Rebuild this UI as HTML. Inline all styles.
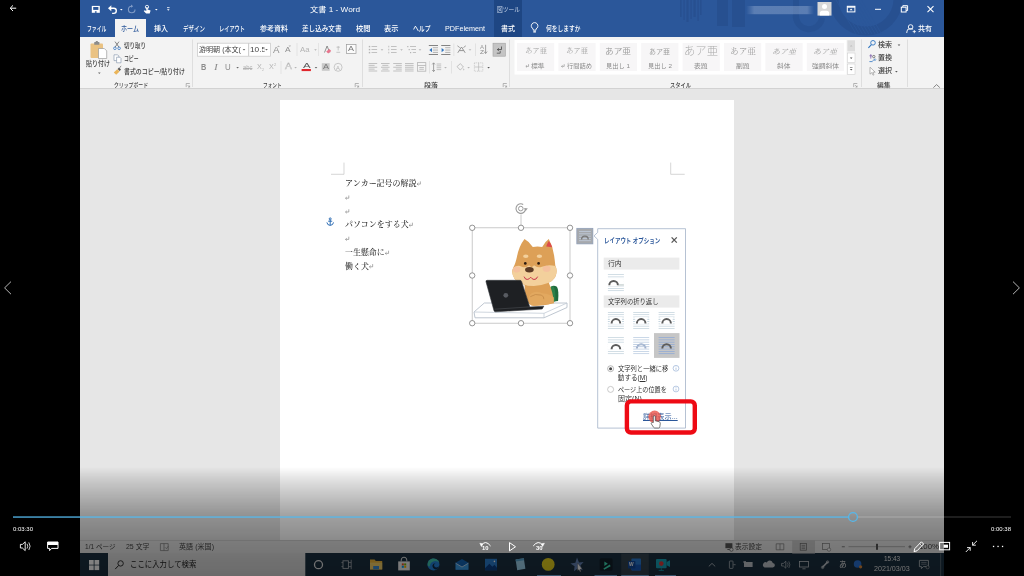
<!DOCTYPE html>
<html lang="ja"><head><meta charset="utf-8"><title>Word</title>
<style>
html,body{margin:0;padding:0;background:#000;}
body{width:1024px;height:576px;position:relative;overflow:hidden;}
.vid{position:absolute;left:0;top:0;width:1024px;height:576px;filter:blur(.45px);}
.ctl{position:absolute;left:0;top:0;width:1024px;height:576px;will-change:transform;}
.t{position:absolute;white-space:nowrap;display:inline-block;transform-origin:0 50%;}
</style></head>
<body>
<div class="vid">
<div style="position:absolute;left:80px;top:0px;width:864px;height:576px;background:#e6e6e6;"></div>
<div style="position:absolute;left:80px;top:0px;width:864px;height:36.5px;background:#2b579a;"></div>
<div style="position:absolute;left:80px;top:36.5px;width:864px;height:51.5px;background:#f3f3f3;"></div>
<div style="position:absolute;left:80px;top:88px;width:864px;height:0.8px;background:#d2d2d2;"></div>
<div style="position:absolute;left:279.5px;top:99.5px;width:454.5px;height:441px;background:#fff;"></div>
<div style="position:absolute;left:80px;top:540px;width:864px;height:13.5px;background:#e3e3e3;"></div>
<div style="position:absolute;left:80px;top:540px;width:864px;height:0.8px;background:#d0d0d0;"></div>
<div style="position:absolute;left:80px;top:553px;width:864px;height:23px;background:#1b3040;"></div>
<svg style="position:absolute;left:0px;top:0px;overflow:visible;clip-path:inset(0 80px 0 80px);" width="1024" height="37" viewBox="0 0 1024 37"><rect x="680" y="0" width="1.6" height="17" fill="#244b8a" opacity=".6"/><rect x="683.5" y="0" width="1.2" height="20" fill="#244b8a" opacity=".6"/><rect x="686.5" y="0" width="2" height="22" fill="#244b8a" opacity=".6"/><rect x="690.5" y="0" width="1.2" height="19" fill="#244b8a" opacity=".6"/><rect x="693.5" y="0" width="2.2" height="17" fill="#244b8a" opacity=".6"/><rect x="697.5" y="0" width="1.2" height="21" fill="#244b8a" opacity=".6"/><rect x="700" y="0" width="1.5" height="15" fill="#244b8a" opacity=".6"/><rect x="717" y="0" width="11" height="26" fill="#244b8a" opacity=".6"/><rect x="732" y="0" width="13" height="27" fill="#244b8a" opacity=".6"/><path d="M796 0v14a13 13 0 0 0 26 4" fill="none" stroke="#244b8a" stroke-width="6" opacity=".5"/><circle cx="866" cy="-1" r="32" fill="none" stroke="#244b8a" stroke-width="9" opacity=".6"/><g stroke="#2b579a" stroke-width="1" opacity=".8"><line x1="836.0" y1="0" x2="856.0" y2="34"/><line x1="839.2" y1="0" x2="859.2" y2="34"/><line x1="842.4" y1="0" x2="862.4" y2="34"/><line x1="845.6" y1="0" x2="865.6" y2="34"/><line x1="848.8" y1="0" x2="868.8" y2="34"/><line x1="852.0" y1="0" x2="872.0" y2="34"/><line x1="855.2" y1="0" x2="875.2" y2="34"/><line x1="858.4" y1="0" x2="878.4" y2="34"/><line x1="861.6" y1="0" x2="881.6" y2="34"/></g></svg>
<div style="position:absolute;left:494px;top:0px;width:28px;height:36.5px;background:#1e4683;"></div>
<span id="t0" class="t" style="left:497px;top:4.8px;font-size:6.5px;line-height:10.4px;color:#c9d6ea;font-family:'Liberation Sans','Noto Sans CJK JP',sans-serif;font-weight:400;transform:scaleX(0.885);">図ツール</span>
<svg style="position:absolute;left:0px;top:0px;overflow:visible;" width="1024" height="37" viewBox="0 0 1024 37"><rect x="91.800" y="5.900" width="8" height="6.900" fill="#fff"/><rect x="93.200" y="7" width="5.200" height="2.900" fill="#2b579a"/><rect x="94.900" y="11.300" width="1.700" height="1.500" fill="#2b579a"/><path d="M109.5 8.2h4.2a2.6 2.6 0 0 1 0 5.2h-1.6" fill="none" stroke="#fff" stroke-width="1.4"/><path d="M108 8.2l3.3-3v6z" fill="#fff"/><path d="M120 9h2.6l-1.3 1.5z" fill="#fff"/><path d="M135 9.5a3.3 3.3 0 1 1-3.3-3.3" fill="none" stroke="#7f9ac6" stroke-width="1.1"/><path d="M131 4.6l2.2 1.7-2.2 1.5z" fill="#7f9ac6"/><circle cx="147" cy="7" r="1.700" fill="none" stroke="#fff" stroke-width=".8"/><path d="M146.300 7v4l-1.600-.8-1 .9 2.400 2.500h3.600l.9-3.200-3-.9v-2.500z" fill="#fff"/><path d="M155 9h2.6l-1.3 1.5z" fill="#fff"/><rect x="167" y="7.3" width="2.6" height=".8" fill="#fff"/><path d="M167 9.2h2.6l-1.3 1.5z" fill="#fff"/><defs><linearGradient id="ub" x1="0" x2="1"><stop offset="0" stop-color="#8ea7cf" stop-opacity=".0"/><stop offset=".12" stop-color="#9db3d6" stop-opacity=".42"/><stop offset=".9" stop-color="#9db3d6" stop-opacity=".42"/><stop offset="1" stop-color="#8ea7cf" stop-opacity="0"/></linearGradient></defs><rect x="746" y="6" width="68" height="8.2" fill="url(#ub)"/><rect x="817.5" y="2" width="14" height="13.6" fill="#d8d8d8"/><circle cx="824.5" cy="6.6" r="2.5" fill="#fff"/><path d="M819.8 15.6v-2.2a2.6 2.6 0 0 1 2.6-2.6h4.2a2.6 2.6 0 0 1 2.6 2.6v2.2z" fill="#fff"/><rect x="847.3" y="6.3" width="7.6" height="5.6" fill="none" stroke="#fff" stroke-width="1"/><path d="M849.6 10.3l1.5-1.8 1.5 1.8z" fill="#fff"/><rect x="847.3" y="6.3" width="7.6" height="1.4" fill="#fff"/><rect x="875" y="8.8" width="6" height="1" fill="#fff"/><rect x="901.3" y="7.2" width="4.8" height="4.8" fill="none" stroke="#fff" stroke-width="1"/><path d="M902.8 7.2v-1.5h4.8v4.8h-1.5" fill="none" stroke="#fff" stroke-width="1"/><path d="M927.5 6.2l6 6m0-6l-6 6" stroke="#fff" stroke-width="1.1"/><path d="M533.2 30.2v-1.3a3.3 3.3 0 1 1 2.8 0v1.3z" fill="none" stroke="#fff" stroke-width=".9"/><rect x="533.3" y="31.2" width="2.6" height="1.3" fill="#fff"/><circle cx="910.6" cy="27" r="2.3" fill="none" stroke="#fff" stroke-width=".9"/><path d="M906.8 33v-1a3.3 3.3 0 0 1 3.3-3.3h1a3.3 3.3 0 0 1 2 .7" fill="none" stroke="#fff" stroke-width=".9"/><path d="M912.7 31.6h3.2m-1.6-1.6v3.2" stroke="#fff" stroke-width=".8"/></svg>
<span id="t1" class="t" style="left:310px;top:4.08px;font-size:7.4px;line-height:11.84px;color:#fff;font-family:'Liberation Sans','Noto Sans CJK JP',sans-serif;font-weight:400;transform:scaleX(1.110);">文書 1  -  Word</span>
<div style="position:absolute;left:115.2px;top:19.2px;width:30.8px;height:17.8px;background:#f3f3f3;"></div>
<span id="t2" class="t" style="left:87px;top:22.58px;font-size:7.4px;line-height:11.84px;color:#fff;font-family:'Liberation Sans','Noto Sans CJK JP',sans-serif;font-weight:500;transform:scaleX(0.659);">ファイル</span>
<span id="t3" class="t" style="left:121px;top:22.58px;font-size:7.4px;line-height:11.84px;color:#2b579a;font-family:'Liberation Sans','Noto Sans CJK JP',sans-serif;font-weight:500;transform:scaleX(0.820);">ホーム</span>
<span id="t4" class="t" style="left:153.5px;top:22.58px;font-size:7.4px;line-height:11.84px;color:#fff;font-family:'Liberation Sans','Noto Sans CJK JP',sans-serif;font-weight:500;transform:scaleX(0.946);">挿入</span>
<span id="t5" class="t" style="left:182.5px;top:22.58px;font-size:7.4px;line-height:11.84px;color:#fff;font-family:'Liberation Sans','Noto Sans CJK JP',sans-serif;font-weight:500;transform:scaleX(0.744);">デザイン</span>
<span id="t6" class="t" style="left:219px;top:22.58px;font-size:7.4px;line-height:11.84px;color:#fff;font-family:'Liberation Sans','Noto Sans CJK JP',sans-serif;font-weight:500;transform:scaleX(0.703);">レイアウト</span>
<span id="t7" class="t" style="left:259.5px;top:22.58px;font-size:7.4px;line-height:11.84px;color:#fff;font-family:'Liberation Sans','Noto Sans CJK JP',sans-serif;font-weight:500;transform:scaleX(0.947);">参考資料</span>
<span id="t8" class="t" style="left:302px;top:22.58px;font-size:7.4px;line-height:11.84px;color:#fff;font-family:'Liberation Sans','Noto Sans CJK JP',sans-serif;font-weight:500;transform:scaleX(0.890);">差し込み文書</span>
<span id="t9" class="t" style="left:355.5px;top:22.58px;font-size:7.4px;line-height:11.84px;color:#fff;font-family:'Liberation Sans','Noto Sans CJK JP',sans-serif;font-weight:500;transform:scaleX(0.980);">校閲</span>
<span id="t10" class="t" style="left:384px;top:22.58px;font-size:7.4px;line-height:11.84px;color:#fff;font-family:'Liberation Sans','Noto Sans CJK JP',sans-serif;font-weight:500;transform:scaleX(0.980);">表示</span>
<span id="t11" class="t" style="left:413px;top:22.58px;font-size:7.4px;line-height:11.84px;color:#fff;font-family:'Liberation Sans','Noto Sans CJK JP',sans-serif;font-weight:500;transform:scaleX(0.789);">ヘルプ</span>
<span id="t12" class="t" style="left:445px;top:22.58px;font-size:7.4px;line-height:11.84px;color:#fff;font-family:'Liberation Sans','Noto Sans CJK JP',sans-serif;font-weight:500;transform:scaleX(0.974);">PDFelement</span>
<span id="t13" class="t" style="left:501px;top:22.58px;font-size:7.4px;line-height:11.84px;color:#fff;font-family:'Liberation Sans','Noto Sans CJK JP',sans-serif;font-weight:500;transform:scaleX(0.946);">書式</span>
<span id="t14" class="t" style="left:545.5px;top:22.58px;font-size:7.4px;line-height:11.84px;color:#fff;font-family:'Liberation Sans','Noto Sans CJK JP',sans-serif;font-weight:500;transform:scaleX(0.778);">何をしますか</span>
<span id="t15" class="t" style="left:918px;top:22.58px;font-size:7.4px;line-height:11.84px;color:#fff;font-family:'Liberation Sans','Noto Sans CJK JP',sans-serif;font-weight:500;transform:scaleX(0.946);">共有</span>
<svg style="position:absolute;left:0px;top:0px;overflow:visible;" width="1024" height="90" viewBox="0 0 1024 90"><rect x="192" y="39.5" width=".7" height="47.5" fill="#d4d4d4"/><rect x="362" y="39.5" width=".7" height="47.5" fill="#d4d4d4"/><rect x="509" y="39.5" width=".7" height="47.5" fill="#d4d4d4"/><rect x="861" y="39.5" width=".7" height="47.5" fill="#d4d4d4"/><rect x="907" y="39.5" width=".7" height="47.5" fill="#d4d4d4"/><rect x="90.5" y="43.5" width="12.5" height="14.5" rx="1" fill="#eac282"/><rect x="94.200" y="42" width="5.200" height="2.800" rx=".6" fill="#8c8c8c"/><rect x="95.800" y="41" width="2" height="1.600" fill="#8c8c8c"/><path d="M98.5 48.5h5.8l2.4 2.4v7.6h-8.2z" fill="#fff" stroke="#8c8c8c" stroke-width=".6"/><path d="M98.0 72.6h2.6l-1.3 1.5z" fill="#666"/><path d="M115 41.6l4 5.6m0-5.6l-4 5.6" stroke="#666" stroke-width=".8"/><circle cx="114.9" cy="48.3" r="1.3" fill="none" stroke="#3a78c4" stroke-width=".8"/><circle cx="119.1" cy="48.3" r="1.3" fill="none" stroke="#3a78c4" stroke-width=".8"/><path d="M114 54.8h3.6l1.2 1.2v4.6h-4.8z" fill="#fff" stroke="#7c8ea6" stroke-width=".6"/><path d="M116.6 57.2h3.2l1.2 1.2v4.4h-4.4z" fill="#fff" stroke="#7c8ea6" stroke-width=".6"/><path d="M113.8 72.4l3.4-3.2 2.4 2.4-3.4 3.2z" fill="#eab55a"/><path d="M117.6 69l1.4-1.4 2 2-1.4 1.4z" fill="#555"/><path d="M119.6 67.6l1.6-1.4" stroke="#555" stroke-width=".8"/><path d="M186.2 87.1v-3.6h3.6" fill="none" stroke="#8a8a8a" stroke-width=".6"/><path d="M187.6 85.1l2 2m0-1.6v1.6h-1.6" fill="none" stroke="#8a8a8a" stroke-width=".6"/><rect x="197.5" y="43.2" width="51" height="13" fill="#fff" stroke="#c6c6c6" stroke-width=".7"/><rect x="248.8" y="43.2" width="21.7" height="13" fill="#fff" stroke="#c6c6c6" stroke-width=".7"/><path d="M242.7 49.099999999999994h2.6l-1.3 1.5z" fill="#666"/><path d="M265.2 49.099999999999994h2.6l-1.3 1.5z" fill="#666"/><path d="M278.5 45.4l1.5 1.6h-3z" fill="#b4b4b4"/><path d="M289.8 47l1.3-1.4h-2.6z" fill="#b4b4b4"/><path d="M314.2 49.3h2.6l-1.3 1.5z" fill="#b4b4b4"/><path d="M324.5 52.5l2.6-6.5 2.6 6.5" fill="none" stroke="#777" stroke-width=".8"/><path d="M326.2 51.6l3.2-2.6 1.8 2-3 2.6z" fill="#e8748c"/><path d="M336.5 47.2h3.4M338.2 46v4.5M336.4 52.3h3.8" stroke="#b4b4b4" stroke-width=".7"/><rect x="346.400" y="44.400" width="9.600" height="9.200" fill="#fbfbfb" stroke="#9a9a9a" stroke-width=".7"/><path d="M236.29999999999998 66.89999999999999h2.6l-1.3 1.5z" fill="#666"/><path d="M294.3 66.89999999999999h2.6l-1.3 1.5z" fill="#b4b4b4"/><path d="M314.7 66.89999999999999h2.6l-1.3 1.5z" fill="#666"/><rect x="301.6" y="69" width="9.300" height="2.100" fill="#e0262c"/><rect x="321.800" y="63.200" width="7.900" height="7.600" fill="#c9c9c9"/><circle cx="338.100" cy="67.300" r="4" fill="none" stroke="#b4b4b4" stroke-width=".7"/><rect x="296.700" y="43" width=".6" height="13" fill="#dadada"/><rect x="318.200" y="43" width=".6" height="13" fill="#dadada"/><rect x="280.700" y="61" width=".6" height="13" fill="#dadada"/><path d="M355.2 87.1v-3.6h3.6" fill="none" stroke="#8a8a8a" stroke-width=".6"/><path d="M356.6 85.1l2 2m0-1.6v1.6h-1.6" fill="none" stroke="#8a8a8a" stroke-width=".6"/></svg>
<span id="t16" class="t" style="left:85.5px;top:59.06px;font-size:6.8px;line-height:10.88px;color:#3c3c3c;font-family:'Liberation Sans','Noto Sans CJK JP',sans-serif;font-weight:500;transform:scaleX(0.883);">貼り付け</span>
<span id="t17" class="t" style="left:124px;top:40.56px;font-size:6.8px;line-height:10.88px;color:#3c3c3c;font-family:'Liberation Sans','Noto Sans CJK JP',sans-serif;font-weight:500;transform:scaleX(0.809);">切り取り</span>
<span id="t18" class="t" style="left:124px;top:54.06px;font-size:6.8px;line-height:10.88px;color:#3c3c3c;font-family:'Liberation Sans','Noto Sans CJK JP',sans-serif;font-weight:500;transform:scaleX(0.711);">コピー</span>
<span id="t19" class="t" style="left:124px;top:67.36px;font-size:6.8px;line-height:10.88px;color:#3c3c3c;font-family:'Liberation Sans','Noto Sans CJK JP',sans-serif;font-weight:500;transform:scaleX(0.873);">書式のコピー/貼り付け</span>
<span id="t20" class="t" style="left:114px;top:80.14px;font-size:6.2px;line-height:9.92px;color:#3c3c3c;font-family:'Liberation Sans','Noto Sans CJK JP',sans-serif;font-weight:500;transform:scaleX(0.785);">クリップボード</span>
<span id="t21" class="t" style="left:199px;top:44.66px;font-size:6.8px;line-height:10.88px;color:#444;font-family:'Liberation Sans','Noto Sans CJK JP',sans-serif;font-weight:400;transform:scaleX(1.039);">游明朝 (本文(</span>
<span id="t22" class="t" style="left:250px;top:44.18px;font-size:7.4px;line-height:11.84px;color:#444;font-family:'Liberation Sans','Noto Sans CJK JP',sans-serif;font-weight:400;transform:scaleX(1.115);overflow:hidden;width:13px;">10.5</span>
<span id="t23" class="t" style="left:273px;top:42.42px;font-size:9.6px;line-height:15.36px;color:#8f8f8f;font-family:'Liberation Sans','Noto Sans CJK JP',sans-serif;font-weight:400;transform:scaleX(1.015);">A</span>
<span id="t24" class="t" style="left:285.4px;top:44.3px;font-size:8px;line-height:12.8px;color:#8f8f8f;font-family:'Liberation Sans','Noto Sans CJK JP',sans-serif;font-weight:400;transform:scaleX(1.048);">A</span>
<span id="t25" class="t" style="left:300.4px;top:44.02px;font-size:7.6px;line-height:12.16px;color:#b4b4b4;font-family:'Liberation Sans','Noto Sans CJK JP',sans-serif;font-weight:400;transform:scaleX(1.033);">Aa</span>
<span id="t26" class="t" style="left:200.9px;top:60.58px;font-size:8.4px;line-height:13.44px;color:#8c8c8c;font-family:'Liberation Sans','Noto Sans CJK JP',sans-serif;font-weight:700;transform:scaleX(0.874);">B</span>
<span id="t27" class="t" style="left:214px;top:59.76px;font-size:8.8px;line-height:14.08px;color:#8c8c8c;font-family:'Liberation Serif',serif;font-weight:400;transform:scaleX(1.294);font-style:italic;">I</span>
<span id="t28" class="t" style="left:225.1px;top:60.58px;font-size:8.4px;line-height:13.44px;color:#8c8c8c;font-family:'Liberation Sans','Noto Sans CJK JP',sans-serif;font-weight:400;transform:scaleX(0.940);">U</span>
<span id="t29" class="t" style="left:243px;top:62.62px;font-size:6.6px;line-height:10.56px;color:#b4b4b4;font-family:'Liberation Sans','Noto Sans CJK JP',sans-serif;font-weight:400;transform:scaleX(0.883);text-decoration:line-through;">abc</span>
<span id="t30" class="t" style="left:256.8px;top:61.42px;font-size:7.6px;line-height:12.16px;color:#b4b4b4;font-family:'Liberation Sans','Noto Sans CJK JP',sans-serif;font-weight:400;transform:scaleX(0.945);">X</span>
<span id="t31" class="t" style="left:262px;top:67.06px;font-size:3.8px;line-height:6.08px;color:#b4b4b4;font-family:'Liberation Sans','Noto Sans CJK JP',sans-serif;font-weight:400;transform:scaleX(0.941);">2</span>
<span id="t32" class="t" style="left:269px;top:61.42px;font-size:7.6px;line-height:12.16px;color:#b4b4b4;font-family:'Liberation Sans','Noto Sans CJK JP',sans-serif;font-weight:400;transform:scaleX(0.945);">X</span>
<span id="t33" class="t" style="left:274.2px;top:62.06px;font-size:3.8px;line-height:6.08px;color:#b4b4b4;font-family:'Liberation Sans','Noto Sans CJK JP',sans-serif;font-weight:400;transform:scaleX(1.082);">2</span>
<span id="t34" class="t" style="left:284.6px;top:60.42px;font-size:8.6px;line-height:13.76px;color:#c4c4c4;font-family:'Liberation Sans','Noto Sans CJK JP',sans-serif;font-weight:400;transform:scaleX(1.186);-webkit-text-stroke:.4px #b4b4b4;color:#f3f3f3;">A</span>
<span id="t35" class="t" style="left:302.6px;top:59.7px;font-size:8px;line-height:12.8px;color:#555;font-family:'Liberation Sans','Noto Sans CJK JP',sans-serif;font-weight:400;transform:scaleX(1.422);">A</span>
<span id="t36" class="t" style="left:322.8px;top:61.42px;font-size:7.6px;line-height:12.16px;color:#777;font-family:'Liberation Sans','Noto Sans CJK JP',sans-serif;font-weight:400;transform:scaleX(1.182);">A</span>
<span id="t37" class="t" style="left:336.2px;top:63.8px;font-size:5px;line-height:8px;color:#b4b4b4;font-family:'Liberation Sans','Noto Sans CJK JP',sans-serif;font-weight:400;transform:scaleX(1.136);">A</span>
<span id="t38" class="t" style="left:348.2px;top:42.9px;font-size:8px;line-height:12.8px;color:#777;font-family:'Liberation Sans','Noto Sans CJK JP',sans-serif;font-weight:400;transform:scaleX(1.123);">A</span>
<span id="t39" class="t" style="left:263px;top:80.14px;font-size:6.2px;line-height:9.92px;color:#3c3c3c;font-family:'Liberation Sans','Noto Sans CJK JP',sans-serif;font-weight:500;transform:scaleX(0.756);">フォント</span>
<svg style="position:absolute;left:0px;top:0px;overflow:visible;" width="1024" height="90" viewBox="0 0 1024 90"><rect x="368.8" y="45.900000000000006" width="1.4" height="1.4" fill="#b4b4b4"/><rect x="371.5" y="46.2" width="5.6" height=".8" fill="#b4b4b4"/><rect x="368.8" y="48.900000000000006" width="1.4" height="1.4" fill="#b4b4b4"/><rect x="371.5" y="49.2" width="5.6" height=".8" fill="#b4b4b4"/><rect x="368.8" y="51.900000000000006" width="1.4" height="1.4" fill="#b4b4b4"/><rect x="371.5" y="52.2" width="5.6" height=".8" fill="#b4b4b4"/><path d="M380.7 49.3h2.6l-1.3 1.5z" fill="#b4b4b4"/><rect x="388.4" y="45.800000000000004" width=".8" height="1.6" fill="#b4b4b4"/><rect x="391" y="46.2" width="5.6" height=".8" fill="#b4b4b4"/><rect x="388.4" y="48.800000000000004" width=".8" height="1.6" fill="#b4b4b4"/><rect x="391" y="49.2" width="5.6" height=".8" fill="#b4b4b4"/><rect x="388.4" y="51.800000000000004" width=".8" height="1.6" fill="#b4b4b4"/><rect x="391" y="52.2" width="5.6" height=".8" fill="#b4b4b4"/><path d="M400.2 49.3h2.6l-1.3 1.5z" fill="#b4b4b4"/><rect x="407.2" y="46.0" width="1.2" height="1.2" fill="#b4b4b4"/><rect x="410.0" y="46.2" width="6.0" height=".8" fill="#b4b4b4"/><rect x="408.59999999999997" y="49.0" width="1.2" height="1.2" fill="#b4b4b4"/><rect x="411.4" y="49.2" width="4.6" height=".8" fill="#b4b4b4"/><rect x="410.0" y="52.0" width="1.2" height="1.2" fill="#b4b4b4"/><rect x="412.8" y="52.2" width="3.2" height=".8" fill="#b4b4b4"/><path d="M418.7 49.3h2.6l-1.3 1.5z" fill="#b4b4b4"/><rect x="428.8" y="45" width="9.2" height=".9" fill="#777"/><rect x="432.8" y="47.3" width="5.2" height=".9" fill="#aaa"/><rect x="432.8" y="49.6" width="5.2" height=".9" fill="#aaa"/><rect x="432.8" y="51.9" width="5.2" height=".9" fill="#aaa"/><rect x="428.8" y="54.1" width="9.2" height=".9" fill="#777"/><rect x="441.2" y="45" width="9.2" height=".9" fill="#777"/><rect x="445.2" y="47.3" width="5.2" height=".9" fill="#aaa"/><rect x="445.2" y="49.6" width="5.2" height=".9" fill="#aaa"/><rect x="445.2" y="51.9" width="5.2" height=".9" fill="#aaa"/><rect x="441.2" y="54.1" width="9.2" height=".9" fill="#777"/><path d="M432 48v4.2l-2.6-2.1z" fill="#2e74c0"/><path d="M441.6 48v4.2l2.6-2.1z" fill="#2e74c0"/><rect x="453.6" y="43.5" width=".6" height="12.5" fill="#d8d8d8"/><rect x="475" y="43.5" width=".6" height="12.5" fill="#d8d8d8"/><path d="M457.800 52.800l3.700-5.800 3.700 5.800M459.300 50.600h4.400" fill="none" stroke="#8a8a8a" stroke-width=".9"/><path d="M457.400 45.800l2.400 1.800m6-1.800l-2.400 1.800" stroke="#8a8a8a" stroke-width=".8"/><path d="M468.7 49.3h2.6l-1.3 1.5z" fill="#b4b4b4"/><path d="M485.6 44.8v8.6m-1.5-1.8l1.5 1.9 1.5-1.9" fill="none" stroke="#8a8a8a" stroke-width=".8"/><rect x="493" y="43.2" width="12.4" height="13" fill="#c4c4c4" stroke="#a2a2a2" stroke-width=".6"/><path d="M501.5 46.5v3h-4m1.4-1.2l-1.6 1.3 1.6 1.3" fill="none" stroke="#444" stroke-width=".8"/><path d="M500.2 50.8v2.4h-3.4" fill="none" stroke="#444" stroke-width=".7"/><rect x="368.6" y="63" width="8.6" height=".8" fill="#b4b4b4"/><rect x="368.6" y="64.9" width="6" height=".8" fill="#b4b4b4"/><rect x="368.6" y="66.8" width="8.6" height=".8" fill="#b4b4b4"/><rect x="368.6" y="68.7" width="6" height=".8" fill="#b4b4b4"/><rect x="368.6" y="70.6" width="8.6" height=".8" fill="#b4b4b4"/><rect x="381" y="63" width="8.6" height=".8" fill="#b4b4b4"/><rect x="382.3" y="64.9" width="6" height=".8" fill="#b4b4b4"/><rect x="381" y="66.8" width="8.6" height=".8" fill="#b4b4b4"/><rect x="382.3" y="68.7" width="6" height=".8" fill="#b4b4b4"/><rect x="381" y="70.6" width="8.6" height=".8" fill="#b4b4b4"/><rect x="393.2" y="63" width="8.6" height=".8" fill="#b4b4b4"/><rect x="395.8" y="64.9" width="6" height=".8" fill="#b4b4b4"/><rect x="393.2" y="66.8" width="8.6" height=".8" fill="#b4b4b4"/><rect x="395.8" y="68.7" width="6" height=".8" fill="#b4b4b4"/><rect x="393.2" y="70.6" width="8.6" height=".8" fill="#b4b4b4"/><rect x="405" y="63" width="8.6" height=".8" fill="#b4b4b4"/><rect x="405" y="64.9" width="8.6" height=".8" fill="#b4b4b4"/><rect x="405" y="66.8" width="8.6" height=".8" fill="#b4b4b4"/><rect x="405" y="68.7" width="8.6" height=".8" fill="#b4b4b4"/><rect x="405" y="70.6" width="8.6" height=".8" fill="#b4b4b4"/><rect x="417.4" y="62.6" width="8.4" height="8.6" fill="none" stroke="#b4b4b4" stroke-width=".8"/><rect x="417.4" y="65" width="8.4" height=".8" fill="#b4b4b4"/><rect x="419.3" y="67" width="4.6" height=".8" fill="#b4b4b4"/><rect x="419.3" y="68.8" width="4.6" height=".8" fill="#b4b4b4"/><rect x="429" y="61" width=".6" height="12.5" fill="#d8d8d8"/><rect x="451" y="61" width=".6" height="12.5" fill="#d8d8d8"/><path d="M433.6 63v8.4m-1.3-7l1.3-1.6 1.3 1.6m-2.6 5.6l1.3 1.6 1.3-1.6" fill="none" stroke="#8a8a8a" stroke-width=".8"/><rect x="436.6" y="63.6" width="4.6" height=".8" fill="#b4b4b4"/><rect x="436.6" y="65.5" width="4.6" height=".8" fill="#b4b4b4"/><rect x="436.6" y="67.4" width="4.6" height=".8" fill="#b4b4b4"/><rect x="436.6" y="69.3" width="4.6" height=".8" fill="#b4b4b4"/><path d="M444.2 66.89999999999999h2.6l-1.3 1.5z" fill="#b4b4b4"/><path d="M457 66.6l3.4-3 3 3.4-3.2 3z" fill="none" stroke="#b4b4b4" stroke-width=".8"/><path d="M463.8 68.2q1.2 1.8 0 2.4-1.2-.6 0-2.4z" fill="#b4b4b4"/><path d="M467.3 66.89999999999999h2.6l-1.3 1.5z" fill="#b4b4b4"/><rect x="474.4" y="62.8" width="8.4" height="8.4" fill="none" stroke="#b4b4b4" stroke-width=".6" stroke-dasharray="1 .8"/><path d="M474.4 67h8.4M478.6 62.8v8.4" stroke="#b4b4b4" stroke-width=".6"/><path d="M487.3 66.89999999999999h2.6l-1.3 1.5z" fill="#555"/><path d="M503.2 87.1v-3.6h3.6" fill="none" stroke="#8a8a8a" stroke-width=".6"/><path d="M504.6 85.1l2 2m0-1.6v1.6h-1.6" fill="none" stroke="#8a8a8a" stroke-width=".6"/></svg>
<span id="t40" class="t" style="left:480px;top:44.32px;font-size:4.6px;line-height:7.36px;color:#9a9a9a;font-family:'Liberation Sans','Noto Sans CJK JP',sans-serif;font-weight:400;transform:scaleX(1.299);">A</span>
<span id="t41" class="t" style="left:480px;top:49.42px;font-size:4.6px;line-height:7.36px;color:#8a8a8a;font-family:'Liberation Sans','Noto Sans CJK JP',sans-serif;font-weight:400;transform:scaleX(1.422);">Z</span>
<span id="t42" class="t" style="left:424px;top:80.14px;font-size:6.2px;line-height:9.92px;color:#3c3c3c;font-family:'Liberation Sans','Noto Sans CJK JP',sans-serif;font-weight:500;transform:scaleX(1.131);">段落</span>
<svg style="position:absolute;left:0px;top:0px;overflow:visible;" width="1024" height="90" viewBox="0 0 1024 90"><rect x="514.5" y="40" width="332" height="34.6" fill="#fff"/><rect x="517" y="43" width="37.2" height="28" fill="#f7f6f7"/><rect x="558.4" y="43" width="37.2" height="28" fill="#f7f6f7"/><rect x="599.8" y="43" width="37.2" height="28" fill="#f7f6f7"/><rect x="641.2" y="43" width="37.2" height="28" fill="#f7f6f7"/><rect x="682.6" y="43" width="37.2" height="28" fill="#f7f6f7"/><rect x="724" y="43" width="37.2" height="28" fill="#f7f6f7"/><rect x="765.4" y="43" width="37.2" height="28" fill="#f7f6f7"/><rect x="806.8" y="43" width="37.2" height="28" fill="#f7f6f7"/><rect x="847.4" y="40.3" width="7.6" height="11" fill="#dcdcdc"/><rect x="847.4" y="53" width="7.6" height="9.6" fill="#fff" stroke="#c8c8c8" stroke-width=".5"/><rect x="847.4" y="64" width="7.6" height="10.4" fill="#fff" stroke="#c8c8c8" stroke-width=".5"/><path d="M849.9 46.6h2.6l-1.3-1.5z" fill="#bdbdbd"/><path d="M849.9000000000001 57.5h2.6l-1.3 1.5z" fill="#555"/><path d="M849.9000000000001 69.1h2.6l-1.3 1.5z" fill="#555"/><rect x="849.9" y="67.2" width="2.6" height=".6" fill="#555"/><path d="M853.7 87.1v-3.6h3.6" fill="none" stroke="#8a8a8a" stroke-width=".6"/><path d="M855.1 85.1l2 2m0-1.6v1.6h-1.6" fill="none" stroke="#8a8a8a" stroke-width=".6"/></svg>
<span id="t43" class="t" style="left:524.6px;top:46px;font-size:7px;line-height:11.2px;color:#a2a2a2;font-family:'Liberation Serif','Noto Serif CJK SC',serif;font-weight:400;transform:scaleX(1.048);">あア亜</span>
<span id="t44" class="t" style="left:531.35px;top:60.94px;font-size:6.2px;line-height:9.92px;color:#8a8a8a;font-family:'Liberation Sans','Noto Sans CJK JP',sans-serif;font-weight:400;transform:scaleX(1.091);">標準</span>
<svg style="position:absolute;left:0;top:0;overflow:visible" width="1" height="1"><path d="M528.55 64.2v2.200h-2.600m1-1l-1.100 1 1.100 1" fill="none" stroke="#8a8a8a" stroke-width=".6"/></svg>
<span id="t45" class="t" style="left:566px;top:46px;font-size:7px;line-height:11.2px;color:#a2a2a2;font-family:'Liberation Serif','Noto Serif CJK SC',serif;font-weight:400;transform:scaleX(1.048);">あア亜</span>
<span id="t46" class="t" style="left:567px;top:60.94px;font-size:6.2px;line-height:9.92px;color:#8a8a8a;font-family:'Liberation Sans','Noto Sans CJK JP',sans-serif;font-weight:400;transform:scaleX(1.010);">行間詰め</span>
<svg style="position:absolute;left:0;top:0;overflow:visible" width="1" height="1"><path d="M564.2 64.2v2.200h-2.600m1-1l-1.100 1 1.100 1" fill="none" stroke="#8a8a8a" stroke-width=".6"/></svg>
<span id="t47" class="t" style="left:605.4px;top:45.7px;font-size:8px;line-height:12.8px;color:#a2a2a2;font-family:'Liberation Sans','Noto Sans CJK JP',sans-serif;font-weight:400;transform:scaleX(1.083);">あア亜</span>
<span id="t48" class="t" style="left:606.4px;top:60.94px;font-size:6.2px;line-height:9.92px;color:#8a8a8a;font-family:'Liberation Sans','Noto Sans CJK JP',sans-serif;font-weight:400;transform:scaleX(1.011);">見出し 1</span>
<span id="t49" class="t" style="left:649.3px;top:46.82px;font-size:6.6px;line-height:10.56px;color:#a2a2a2;font-family:'Liberation Sans','Noto Sans CJK JP',sans-serif;font-weight:400;transform:scaleX(1.062);">あア亜</span>
<span id="t50" class="t" style="left:647.8px;top:60.94px;font-size:6.2px;line-height:9.92px;color:#8a8a8a;font-family:'Liberation Sans','Noto Sans CJK JP',sans-serif;font-weight:400;transform:scaleX(1.011);">見出し 2</span>
<span id="t51" class="t" style="left:684.2px;top:43.14px;font-size:11.2px;line-height:17.92px;color:#ababab;font-family:'Liberation Sans','Noto Sans CJK JP',sans-serif;font-weight:300;transform:scaleX(1.013);">あア亜</span>
<span id="t52" class="t" style="left:694.45px;top:60.94px;font-size:6.2px;line-height:9.92px;color:#8a8a8a;font-family:'Liberation Sans','Noto Sans CJK JP',sans-serif;font-weight:400;transform:scaleX(1.091);">表題</span>
<span id="t53" class="t" style="left:729.6px;top:44.88px;font-size:8.4px;line-height:13.44px;color:#a2a2a2;font-family:'Liberation Serif','Noto Serif CJK SC',serif;font-weight:400;transform:scaleX(1.035);">あア亜</span>
<span id="t54" class="t" style="left:735.85px;top:60.94px;font-size:6.2px;line-height:9.92px;color:#8a8a8a;font-family:'Liberation Sans','Noto Sans CJK JP',sans-serif;font-weight:400;transform:scaleX(1.091);">副題</span>
<span id="t55" class="t" style="left:772px;top:45.68px;font-size:7.4px;line-height:11.84px;color:#a2a2a2;font-family:'Liberation Serif','Noto Serif CJK SC',serif;font-weight:400;transform:scaleX(1.082);font-style:italic;">あア亜</span>
<span id="t56" class="t" style="left:777.25px;top:60.94px;font-size:6.2px;line-height:9.92px;color:#8a8a8a;font-family:'Liberation Sans','Noto Sans CJK JP',sans-serif;font-weight:400;transform:scaleX(1.091);">斜体</span>
<span id="t57" class="t" style="left:813.4px;top:45.68px;font-size:7.4px;line-height:11.84px;color:#a2a2a2;font-family:'Liberation Serif','Noto Serif CJK SC',serif;font-weight:400;transform:scaleX(1.082);font-style:italic;">あア亜</span>
<span id="t58" class="t" style="left:811.9px;top:60.94px;font-size:6.2px;line-height:9.92px;color:#8a8a8a;font-family:'Liberation Sans','Noto Sans CJK JP',sans-serif;font-weight:400;transform:scaleX(1.091);">強調斜体</span>
<span id="t59" class="t" style="left:670px;top:80.14px;font-size:6.2px;line-height:9.92px;color:#3c3c3c;font-family:'Liberation Sans','Noto Sans CJK JP',sans-serif;font-weight:500;transform:scaleX(0.848);">スタイル</span>
<svg style="position:absolute;left:0px;top:0px;overflow:visible;" width="1024" height="90" viewBox="0 0 1024 90"><circle cx="873" cy="42.8" r="2.3" fill="none" stroke="#2e74c0" stroke-width=".9"/><path d="M871.4 44.6l-3 3.2" stroke="#2e74c0" stroke-width="1.1"/><path d="M897.7 44.599999999999994h2.6l-1.3 1.5z" fill="#555"/><path d="M895.1 70.89999999999999h2.6l-1.3 1.5z" fill="#555"/><path d="M869.5 55.8h2.6m-1.3-1.6v4.4" stroke="#7a5aa8" stroke-width=".8"/><path d="M872.6 60.4c1.8 0 2.4-.8 2.4-2m-1 1l1 1.2 1-1.2" fill="none" stroke="#2e74c0" stroke-width=".7"/><path d="M869.4 61.6h3.2" stroke="#2e74c0" stroke-width=".8"/><circle cx="873.8" cy="56.6" r="1.2" fill="none" stroke="#3a3a3a" stroke-width=".6"/><path d="M870 67.2v7l1.8-1.6 1.2 2.6 1-.5-1.2-2.5h2.4z" fill="#fff" stroke="#8a8a8a" stroke-width=".6"/><path d="M933.4 87.6l3.2-3 3.2 3" fill="none" stroke="#666" stroke-width=".8"/></svg>
<span id="t60" class="t" style="left:878px;top:39.86px;font-size:6.8px;line-height:10.88px;color:#3c3c3c;font-family:'Liberation Sans','Noto Sans CJK JP',sans-serif;font-weight:500;transform:scaleX(1.030);">検索</span>
<span id="t61" class="t" style="left:878px;top:53.06px;font-size:6.8px;line-height:10.88px;color:#3c3c3c;font-family:'Liberation Sans','Noto Sans CJK JP',sans-serif;font-weight:500;transform:scaleX(1.030);">置換</span>
<span id="t62" class="t" style="left:878px;top:66.36px;font-size:6.8px;line-height:10.88px;color:#3c3c3c;font-family:'Liberation Sans','Noto Sans CJK JP',sans-serif;font-weight:500;transform:scaleX(1.030);">選択</span>
<span id="t63" class="t" style="left:877px;top:80.14px;font-size:6.2px;line-height:9.92px;color:#3c3c3c;font-family:'Liberation Sans','Noto Sans CJK JP',sans-serif;font-weight:500;transform:scaleX(1.091);">編集</span>
<svg style="position:absolute;left:0px;top:0px;overflow:visible;" width="1024" height="576" viewBox="0 0 1024 576"><path d="M331 174.3h13v-11.7" fill="none" stroke="#c4c4c4" stroke-width=".7"/><path d="M684.7 174.3h-14v-11.7" fill="none" stroke="#c4c4c4" stroke-width=".7"/><g stroke="#2e6db4" stroke-width="1" fill="none"><circle cx="330.200" cy="218.900" r="1"/><path d="M330.200 219.900v5.400M328.200 221.200h4M326.900 222.400q.3 2.800 3.300 3 3-.2 3.300-3"/></g></svg>
<span id="t64" class="t" style="left:344.6px;top:177.98px;font-size:7.9px;line-height:12.64px;color:#2a2a2a;font-family:'Liberation Serif','Noto Serif CJK SC',serif;font-weight:500;transform:scaleX(1.012);">アンカー記号の解説</span>
<span id="t65" class="t" style="left:344.6px;top:219.28px;font-size:7.9px;line-height:12.64px;color:#2a2a2a;font-family:'Liberation Serif','Noto Serif CJK SC',serif;font-weight:500;transform:scaleX(1.010);">パソコンをする犬</span>
<span id="t66" class="t" style="left:344.6px;top:247.28px;font-size:7.9px;line-height:12.64px;color:#2a2a2a;font-family:'Liberation Serif','Noto Serif CJK SC',serif;font-weight:500;transform:scaleX(1.007);">一生懸命に</span>
<span id="t67" class="t" style="left:344.6px;top:260.68px;font-size:7.9px;line-height:12.64px;color:#2a2a2a;font-family:'Liberation Serif','Noto Serif CJK SC',serif;font-weight:500;transform:scaleX(1.007);">働く犬</span>
<svg style="position:absolute;left:0px;top:0px;overflow:visible;" width="1024" height="576" viewBox="0 0 1024 576"><path d="M420.35 181.4v2.700h-3.200m1.200-1.200l-1.300 1.200 1.300 1.200" fill="none" stroke="#777" stroke-width=".6"/><path d="M348.8 195.5v2.700h-3.200m1.200-1.200l-1.300 1.200 1.300 1.200" fill="none" stroke="#777" stroke-width=".6"/><path d="M348.8 209.3v2.700h-3.200m1.200-1.200l-1.300 1.200 1.300 1.200" fill="none" stroke="#777" stroke-width=".6"/><path d="M412.4 222.7v2.700h-3.200m1.200-1.200l-1.300 1.200 1.300 1.200" fill="none" stroke="#777" stroke-width=".6"/><path d="M348.8 236.7v2.700h-3.200m1.200-1.200l-1.300 1.200 1.300 1.200" fill="none" stroke="#777" stroke-width=".6"/><path d="M388.55 250.7v2.700h-3.200m1.200-1.200l-1.300 1.200 1.300 1.200" fill="none" stroke="#777" stroke-width=".6"/><path d="M372.65 264.1v2.700h-3.200m1.200-1.200l-1.300 1.200 1.300 1.200" fill="none" stroke="#777" stroke-width=".6"/></svg>
<svg style="position:absolute;left:0px;top:0px;overflow:visible;" width="1024" height="576" viewBox="0 0 1024 576"><path d="M484.3 303h82.7v4.5l-23 10.3h-69l-1-5.800z" fill="#fff" stroke="#b7c0cb" stroke-width=".9" stroke-linejoin="round"/><path d="M474 312l70 1.300l23-10.300M544 313.300v4.500" fill="none" stroke="#c3cbd5" stroke-width=".8"/><path d="M550.6 287.0Q553.4 284.8 556.9 286.7Q559.1 290.1 558.1 301.1L550.3 301.7z" fill="#1f6b3c" /><path d="M550.6 287.0Q552.2 285.8 553.8 286.4Q555.9 291.4 555.3 301.4L550.3 301.7z" fill="#2c8049" /><path d="M524.5 283.6L548.8 282.8Q552.8 291.4 554.1 303.2Q542.5 306.4 531.6 305.4L525.3 300.8z" fill="#dda057" /><path d="M531.6 293.2Q536.2 290.1 542.5 293.2Q550.3 293.9 553.8 297.6Q554.7 303.2 548.8 304.2L533.9 305.8Q528.8 305.1 528.4 300.8Q528.1 295.8 531.6 293.2z" fill="#e2a85f" /><path d="M530.3 296.7Q535.0 293.2 541.2 295.1Q544.4 296.4 543.8 299.2" fill="none" stroke="#c48a47" stroke-width=".8"/><path d="M524.5 238.9Q529.7 241.7 532.8 247.0Q537.5 245.8 542.2 247.0Q544.7 241.7 548.8 238.9Q552.8 246.1 554.1 255.4Q555.0 261.7 555.3 265.6Q558.1 271.1 555.0 277.6Q550.3 285.1 533.9 286.1Q520.9 285.8 514.7 278.9Q510.6 272.9 513.4 267.3Q515.3 264.2 516.9 257.0Q518.8 246.1 524.5 238.9z" fill="#dda057" /><path d="M513.4 267.6Q517.5 264.2 521.9 266.7Q526.9 268.9 531.6 262.6Q536.2 268.9 541.9 266.7Q548.8 263.9 555.3 266.1Q558.1 271.1 555.0 277.6Q550.3 285.1 533.9 286.1Q520.9 285.8 514.7 278.9Q510.6 272.9 513.4 267.6z" fill="#f3d09c" /><path d="M526.9 258.6L536.6 258.6Q535.6 265.4 531.6 267.3Q527.5 265.4 526.9 258.6z" fill="#dda057" /><path d="M548.8 241.1Q551.2 243.9 552.2 247.3L546.2 246.4Q547.2 243.6 548.8 241.1z" fill="#dd4b4b" /><ellipse cx="516.700" cy="269.600" rx="3.700" ry="3" fill="#f6b7a0" opacity=".6"/><ellipse cx="546.600" cy="268.800" rx="4" ry="3.100" fill="#f6b7a0" opacity=".6"/><ellipse cx="525.800" cy="256.300" rx="2.700" ry="1.700" fill="#f3d09c"/><ellipse cx="539.400" cy="256.300" rx="2.700" ry="1.700" fill="#f3d09c"/><circle cx="525.300" cy="263.400" r="1.350" fill="#2a1a10"/><circle cx="538.600" cy="263.400" r="1.350" fill="#2a1a10"/><ellipse cx="529.400" cy="269.700" rx="4.300" ry="2.700" fill="#5b3a24"/><path d="M524.200 277q1.200 3.200 3.600 2.400q1.800-.600 2.900-2.200q1.200 1.800 3.200 2.300q2.400.400 3.600-2.500" fill="none" stroke="#c9364c" stroke-width="1" stroke-linecap="round"/><path d="M487.200 280.300h32.800q1.200 0 1.600 1.100l8.200 25.600l14-.8l-1.600 2.800l-46.600 2.800q-1.200.1-1.600-1.100l-8-29q-.3-1.400 1.200-1.400z" fill="#1e2023" stroke="#34373c" stroke-width=".6"/><path d="M494.600 309.200l35-2.300" stroke="#4a4d52" stroke-width=".6"/><circle cx="505.800" cy="295.300" r="2.400" fill="#585b61"/><rect x="472.200" y="227.800" width="97.800" height="95.400" fill="none" stroke="#bdbdbd" stroke-width=".8"/><path d="M521 227.800v-16" stroke="#bdbdbd" stroke-width=".8"/><circle cx="472.2" cy="227.8" r="2.700" fill="#fff" stroke="#7a7a7a" stroke-width=".8"/><circle cx="472.2" cy="275.5" r="2.700" fill="#fff" stroke="#7a7a7a" stroke-width=".8"/><circle cx="472.2" cy="323.2" r="2.700" fill="#fff" stroke="#7a7a7a" stroke-width=".8"/><circle cx="521" cy="227.8" r="2.700" fill="#fff" stroke="#7a7a7a" stroke-width=".8"/><circle cx="521" cy="323.2" r="2.700" fill="#fff" stroke="#7a7a7a" stroke-width=".8"/><circle cx="570" cy="227.8" r="2.700" fill="#fff" stroke="#7a7a7a" stroke-width=".8"/><circle cx="570" cy="275.5" r="2.700" fill="#fff" stroke="#7a7a7a" stroke-width=".8"/><circle cx="570" cy="323.2" r="2.700" fill="#fff" stroke="#7a7a7a" stroke-width=".8"/><circle cx="520.800" cy="208.600" r="6" fill="#fff"/><path d="M525.600 208.600a4.800 4.800 0 1 1-2.400-4.150" fill="none" stroke="#9c9c9c" stroke-width="1.100"/><path d="M523.800 208.300h4l-2 2.600z" fill="#9c9c9c"/><circle cx="520.800" cy="208.600" r="2.300" fill="none" stroke="#9c9c9c" stroke-width="1"/></svg>
<svg style="position:absolute;left:0px;top:0px;overflow:visible;" width="1024" height="576" viewBox="0 0 1024 576"><rect x="576.800" y="228.300" width="16.100" height="15.600" fill="#a6a9ad" stroke="#8d9db8" stroke-width=".7"/><rect x="579" y="231.2" width="11.800" height=".7" fill="#c3d0e2"/><rect x="579" y="233.5" width="11.800" height=".7" fill="#c3d0e2"/><rect x="579" y="235.8" width="11.800" height=".7" fill="#c3d0e2"/><rect x="579" y="238.1" width="11.800" height=".7" fill="#c3d0e2"/><rect x="579" y="240.4" width="11.800" height=".7" fill="#c3d0e2"/><path d="M581.600 239.400a3.300 3.300 0 0 1 6.600 0" fill="none" stroke="#787878" stroke-width="1.400"/><path d="M597.700 228.700h87.800v199.400h-87.800v-188.700l-3.700-3.500l3.700-3.500z" fill="#fff" stroke="#a3b2c8" stroke-width=".8"/><rect x="603.700" y="257.600" width="75.700" height="12" fill="#ebebeb"/><rect x="603.700" y="295.400" width="75.700" height="12.200" fill="#ebebeb"/><rect x="654" y="333.100" width="25.500" height="24.800" fill="#c6c6c6"/><rect x="607.9" y="274.20" width="16" height=".75" fill="#c3d3dd"/><rect x="607.9" y="276.50" width="16" height=".75" fill="#c3d3dd"/><rect x="607.9" y="278.80" width="16" height=".75" fill="#c3d3dd"/><rect x="607.9" y="281.10" width="16" height=".75" fill="#c3d3dd"/><rect x="607.9" y="283.40" width="16" height=".75" fill="#c3d3dd"/><rect x="607.9" y="285.70" width="16" height=".75" fill="#c3d3dd"/><rect x="607.9" y="288.00" width="16" height=".75" fill="#c3d3dd"/><rect x="607.9" y="290.30" width="16" height=".75" fill="#c3d3dd"/><rect x="607.9" y="278.2" width="16" height="8" fill="#fff"/><path d="M609.3 285.2a4.300 4.300 0 0 1 8.600 0" fill="none" stroke="#5c5c5c" stroke-width="2"/><rect x="618.4" y="284.6" width="5.500" height=".75" fill="#9aa"/><rect x="607.9" y="312.00" width="16" height=".75" fill="#c3d3dd"/><rect x="607.9" y="314.30" width="16" height=".75" fill="#c3d3dd"/><rect x="607.9" y="316.60" width="16" height=".75" fill="#c3d3dd"/><rect x="607.9" y="318.90" width="16" height=".75" fill="#c3d3dd"/><rect x="607.9" y="321.20" width="16" height=".75" fill="#c3d3dd"/><rect x="607.9" y="323.50" width="16" height=".75" fill="#c3d3dd"/><rect x="607.9" y="325.80" width="16" height=".75" fill="#c3d3dd"/><rect x="607.9" y="328.10" width="16" height=".75" fill="#c3d3dd"/><rect x="609.4" y="317.2" width="13" height="6.700" fill="#fff"/><rect x="607.9" y="318.9" width="2" height=".75" fill="#c3d3dd"/><rect x="621.9" y="318.9" width="2" height=".75" fill="#c3d3dd"/><rect x="607.9" y="321.2" width="2" height=".75" fill="#c3d3dd"/><rect x="621.9" y="321.2" width="2" height=".75" fill="#c3d3dd"/><path d="M611.6 323.4a4.300 4.300 0 0 1 8.600 0" fill="none" stroke="#5c5c5c" stroke-width="2"/><rect x="633.2" y="312.00" width="16" height=".75" fill="#c3d3dd"/><rect x="633.2" y="314.30" width="16" height=".75" fill="#c3d3dd"/><rect x="633.2" y="316.60" width="16" height=".75" fill="#c3d3dd"/><rect x="633.2" y="318.90" width="16" height=".75" fill="#c3d3dd"/><rect x="633.2" y="321.20" width="16" height=".75" fill="#c3d3dd"/><rect x="633.2" y="323.50" width="16" height=".75" fill="#c3d3dd"/><rect x="633.2" y="325.80" width="16" height=".75" fill="#c3d3dd"/><rect x="633.2" y="328.10" width="16" height=".75" fill="#c3d3dd"/><rect x="634.7" y="317.2" width="13" height="6.700" fill="#fff"/><rect x="633.2" y="318.9" width="2" height=".75" fill="#c3d3dd"/><rect x="647.2" y="318.9" width="2" height=".75" fill="#c3d3dd"/><rect x="633.2" y="321.2" width="2" height=".75" fill="#c3d3dd"/><rect x="647.2" y="321.2" width="2" height=".75" fill="#c3d3dd"/><path d="M636.9 323.4a4.300 4.300 0 0 1 8.600 0" fill="none" stroke="#5c5c5c" stroke-width="2"/><rect x="658.6" y="312.00" width="16" height=".75" fill="#c3d3dd"/><rect x="658.6" y="314.30" width="16" height=".75" fill="#c3d3dd"/><rect x="658.6" y="316.60" width="16" height=".75" fill="#c3d3dd"/><rect x="658.6" y="318.90" width="16" height=".75" fill="#c3d3dd"/><rect x="658.6" y="321.20" width="16" height=".75" fill="#c3d3dd"/><rect x="658.6" y="323.50" width="16" height=".75" fill="#c3d3dd"/><rect x="658.6" y="325.80" width="16" height=".75" fill="#c3d3dd"/><rect x="658.6" y="328.10" width="16" height=".75" fill="#c3d3dd"/><rect x="660.1" y="317.2" width="13" height="6.700" fill="#fff"/><rect x="658.6" y="318.9" width="2" height=".75" fill="#c3d3dd"/><rect x="672.6" y="318.9" width="2" height=".75" fill="#c3d3dd"/><rect x="658.6" y="321.2" width="2" height=".75" fill="#c3d3dd"/><rect x="672.6" y="321.2" width="2" height=".75" fill="#c3d3dd"/><path d="M662.3 323.4a4.300 4.300 0 0 1 8.600 0" fill="none" stroke="#5c5c5c" stroke-width="2"/><rect x="607.9" y="337.20" width="16" height=".75" fill="#c3d3dd"/><rect x="607.9" y="339.50" width="16" height=".75" fill="#c3d3dd"/><rect x="607.9" y="341.80" width="16" height=".75" fill="#c3d3dd"/><rect x="607.9" y="344.10" width="16" height=".75" fill="#c3d3dd"/><rect x="607.9" y="346.40" width="16" height=".75" fill="#c3d3dd"/><rect x="607.9" y="348.70" width="16" height=".75" fill="#c3d3dd"/><rect x="607.9" y="351.00" width="16" height=".75" fill="#c3d3dd"/><rect x="607.9" y="353.30" width="16" height=".75" fill="#c3d3dd"/><rect x="607.9" y="343.4" width="16" height="6.400" fill="#fff"/><path d="M611.6 349.2a4.300 4.300 0 0 1 8.600 0" fill="none" stroke="#5c5c5c" stroke-width="2"/><rect x="633.2" y="337.20" width="16" height=".75" fill="#b9cbe0"/><rect x="633.2" y="339.50" width="16" height=".75" fill="#b9cbe0"/><rect x="633.2" y="341.80" width="16" height=".75" fill="#b9cbe0"/><rect x="633.2" y="344.10" width="16" height=".75" fill="#b9cbe0"/><rect x="633.2" y="346.40" width="16" height=".75" fill="#b9cbe0"/><rect x="633.2" y="348.70" width="16" height=".75" fill="#b9cbe0"/><rect x="633.2" y="351.00" width="16" height=".75" fill="#b9cbe0"/><rect x="633.2" y="353.30" width="16" height=".75" fill="#b9cbe0"/><path d="M636.9 348.6a4.300 4.300 0 0 1 8.600 0" fill="none" stroke="#9fb0cc" stroke-width="2"/><rect x="633.2" y="344.10" width="16" height=".6" fill="#b9cbe0" opacity=".8"/><rect x="633.2" y="346.40" width="16" height=".6" fill="#b9cbe0" opacity=".8"/><rect x="658.6" y="337.20" width="16" height=".75" fill="#8ea9d6"/><rect x="658.6" y="339.50" width="16" height=".75" fill="#8ea9d6"/><rect x="658.6" y="341.80" width="16" height=".75" fill="#8ea9d6"/><rect x="658.6" y="344.10" width="16" height=".75" fill="#8ea9d6"/><rect x="658.6" y="346.40" width="16" height=".75" fill="#8ea9d6"/><rect x="658.6" y="348.70" width="16" height=".75" fill="#8ea9d6"/><rect x="658.6" y="351.00" width="16" height=".75" fill="#8ea9d6"/><rect x="658.6" y="353.30" width="16" height=".75" fill="#8ea9d6"/><path d="M662.3 348.6a4.300 4.300 0 0 1 8.600 0" fill="none" stroke="#5c5c5c" stroke-width="2"/><path d="M671.600 237.400l5.200 5.200m0-5.200l-5.200 5.200" stroke="#555" stroke-width="1.300"/><circle cx="610.600" cy="368.700" r="3" fill="#fff" stroke="#9a9a9a" stroke-width=".7"/><circle cx="610.600" cy="368.700" r="1.500" fill="#444"/><circle cx="610.600" cy="389.400" r="3" fill="#fff" stroke="#b4b4b4" stroke-width=".7"/><circle cx="676" cy="368.3" r="2.900" fill="none" stroke="#8aa6d0" stroke-width=".6"/><rect x="675.700" y="367.90000000000003" width=".6" height="2" fill="#8aa6d0"/><rect x="675.700" y="366.6" width=".6" height=".7" fill="#8aa6d0"/><circle cx="676" cy="389" r="2.900" fill="none" stroke="#8aa6d0" stroke-width=".6"/><rect x="675.700" y="388.6" width=".6" height="2" fill="#8aa6d0"/><rect x="675.700" y="387.3" width=".6" height=".7" fill="#8aa6d0"/></svg>
<span id="t68" class="t" style="left:603.8px;top:235.4px;font-size:7px;line-height:11.2px;color:#2b579a;font-family:'Liberation Sans','Noto Sans CJK JP',sans-serif;font-weight:700;transform:scaleX(0.781);">レイアウト オプション</span>
<span id="t69" class="t" style="left:607.8px;top:258.92px;font-size:6.6px;line-height:10.56px;color:#333;font-family:'Liberation Sans','Noto Sans CJK JP',sans-serif;font-weight:400;transform:scaleX(1.031);">行内</span>
<span id="t70" class="t" style="left:607.9px;top:296.82px;font-size:6.6px;line-height:10.56px;color:#333;font-family:'Liberation Sans','Noto Sans CJK JP',sans-serif;font-weight:400;transform:scaleX(0.957);">文字列の折り返し</span>
<span id="t71" class="t" style="left:617.8px;top:364.42px;font-size:6.6px;line-height:10.56px;color:#333;font-family:'Liberation Sans','Noto Sans CJK JP',sans-serif;font-weight:400;transform:scaleX(0.954);">文字列と一緒に移</span>
<span id="t72" class="t" style="left:617.8px;top:373.22px;font-size:6.6px;line-height:10.56px;color:#333;font-family:'Liberation Sans','Noto Sans CJK JP',sans-serif;font-weight:400;">動する(<u>M</u>)</span>
<span id="t73" class="t" style="left:617.8px;top:384.92px;font-size:6.6px;line-height:10.56px;color:#333;font-family:'Liberation Sans','Noto Sans CJK JP',sans-serif;font-weight:400;transform:scaleX(0.927);">ページ上の位置を</span>
<span id="t74" class="t" style="left:617.8px;top:393.82px;font-size:6.6px;line-height:10.56px;color:#333;font-family:'Liberation Sans','Noto Sans CJK JP',sans-serif;font-weight:400;transform:scaleX(1.064);">固定(<u>N</u>)</span>
<span id="t75" class="t" style="left:643.1px;top:412.36px;font-size:6.8px;line-height:10.88px;color:#2b579a;font-family:'Liberation Sans','Noto Sans CJK JP',sans-serif;font-weight:400;transform:scaleX(1.056);text-decoration:underline;">詳細表示...</span>
<svg style="position:absolute;left:0px;top:0px;overflow:visible;" width="1024" height="576" viewBox="0 0 1024 576"><rect x="626.900" y="401.400" width="67.900" height="31.100" rx="4" fill="none" stroke="#ee0a14" stroke-width="4.400"/><circle cx="654.600" cy="416.800" r="6.200" fill="#ea5247" opacity=".8"/><path d="M653.300 422.600v-5.800q0-1.100 1-1.100t1 1.100v4l3.800.9q1.300.4 1.200 1.600l-.5 3.600q-.2 1.100-1.300 1.100h-3.600q-.8 0-1.300-.7l-2.200-3.300q-.5-.9.200-1.400t1.400.2z" fill="#fff" stroke="#444" stroke-width=".7"/></svg>
<svg style="position:absolute;left:0px;top:0px;overflow:visible;" width="1024" height="576" viewBox="0 0 1024 576"><path d="M160.400 543.600h3.600v7h-3.600zM164 543.600h4.200v7h-4.200" fill="none" stroke="#777" stroke-width=".7"/><path d="M165.200 547.400l1.200 1.300 2-2.600" fill="none" stroke="#777" stroke-width=".7"/><rect x="725.400" y="543.200" width="7" height="5" fill="#555"/><rect x="727.400" y="549" width="3" height=".9" fill="#555"/><circle cx="731.400" cy="549.600" r="1.700" fill="#f3f3f3" stroke="#555" stroke-width=".7"/><rect x="792.200" y="540" width="22.800" height="13.500" fill="#c8c8c8"/><path d="M776.200 543.800h3.800v6h-3.800zM780 543.800h3.800v6h-3.800" fill="none" stroke="#777" stroke-width=".7"/><rect x="800.200" y="543.400" width="6.400" height="6.800" fill="none" stroke="#666" stroke-width=".7"/><path d="M801.600 545.400h3.600M801.600 547h3.600M801.600 548.600h3.600" stroke="#666" stroke-width=".6"/><rect x="822.600" y="543.600" width="7" height="5.800" fill="none" stroke="#777" stroke-width=".7"/><circle cx="829" cy="549.600" r="1.700" fill="#f3f3f3" stroke="#777" stroke-width=".6"/><rect x="841.800" y="546.400" width="3" height=".8" fill="#666"/><rect x="848.500" y="546.500" width="56.500" height=".6" fill="#8a8a8a"/><rect x="876" y="543.800" width="2" height="6" fill="#555"/><path d="M908.400 546.800h3.200m-1.600-1.600v3.200" stroke="#666" stroke-width=".8"/></svg>
<span id="t76" class="t" style="left:84.5px;top:541.64px;font-size:6.7px;line-height:10.72px;color:#444;font-family:'Liberation Sans','Noto Sans CJK JP',sans-serif;font-weight:400;transform:scaleX(0.981);">1/1 ページ</span>
<span id="t77" class="t" style="left:126px;top:541.64px;font-size:6.7px;line-height:10.72px;color:#444;font-family:'Liberation Sans','Noto Sans CJK JP',sans-serif;font-weight:400;transform:scaleX(1.037);">25 文字</span>
<span id="t78" class="t" style="left:179px;top:541.64px;font-size:6.7px;line-height:10.72px;color:#444;font-family:'Liberation Sans','Noto Sans CJK JP',sans-serif;font-weight:400;transform:scaleX(1.059);">英語 (米国)</span>
<span id="t79" class="t" style="left:735px;top:541.64px;font-size:6.7px;line-height:10.72px;color:#444;font-family:'Liberation Sans','Noto Sans CJK JP',sans-serif;font-weight:400;transform:scaleX(1.009);">表示設定</span>
<span id="t80" class="t" style="left:919px;top:541.64px;font-size:6.7px;line-height:10.72px;color:#444;font-family:'Liberation Sans','Noto Sans CJK JP',sans-serif;font-weight:400;transform:scaleX(1.169);">100%</span>
<svg style="position:absolute;left:0px;top:0px;overflow:visible;" width="1024" height="576" viewBox="0 0 1024 576"><rect x="108" y="553" width="197.300" height="23" fill="#dedede"/><rect x="89" y="560" width="4.700" height="4.700" fill="#fff"/><rect x="94.5" y="560" width="4.700" height="4.700" fill="#fff"/><rect x="89" y="565.4" width="4.700" height="4.700" fill="#fff"/><rect x="94.5" y="565.4" width="4.700" height="4.700" fill="#fff"/><circle cx="120.600" cy="563.400" r="2.700" fill="none" stroke="#222" stroke-width=".9"/><path d="M118.600 565.500l-3.400 3.600" stroke="#222" stroke-width="1"/><circle cx="318.500" cy="564.700" r="4" fill="none" stroke="#e4e4e4" stroke-width="1.300"/><rect x="343" y="560.800" width="5.400" height="7.600" fill="none" stroke="#aab0b5" stroke-width=".9"/><path d="M351.200 559.800v9.400M341.400 562.600h1.600M341.400 566.600h1.600M348.400 562.600h2.800M348.400 566.600h2.800" stroke="#aab0b5" stroke-width=".8"/><path d="M370 559.600h4.600l1.200 1.400h6.400v8.400h-12.200z" fill="#f0b93a"/><rect x="370" y="562.600" width="12.200" height="6.800" fill="#f7d36b"/><rect x="373.200" y="566" width="5.800" height="3.400" fill="#3b8fd6"/><rect x="398.200" y="561.400" width="11.600" height="9" fill="#f4f4f4"/><path d="M401.200 561.400v-1.400a2.800 2.800 0 0 1 5.600 0v1.400" fill="none" stroke="#f4f4f4" stroke-width=".9"/><rect x="401.800" y="563.400" width="2" height="2" fill="#f25022"/><rect x="404.200" y="563.400" width="2" height="2" fill="#7fba00"/><rect x="401.800" y="565.800" width="2" height="2" fill="#00a4ef"/><rect x="404.200" y="565.800" width="2" height="2" fill="#ffb900"/><circle cx="433.500" cy="564.600" r="6" fill="#2484dc"/><path d="M427.600 565.400a6 6 0 0 1 11.700-2.600q-2.600-2.600-6-1.400q-3.400 1.400-3.600 5.200q-1 -.2-2.100-1.200z" fill="#41c8b0"/><path d="M439.400 565.800q-1.200 1.800-3.400 1.600q-1.800-.4-2-2.200q.2-1.600 1.600-2.200q-2.600 0-3.200 2.600q0 3 3 3.800q2.800.2 4-3.600z" fill="#102a48"/><path d="M455.600 562.800l6.400-3.800 6.400 3.800v7h-12.800z" fill="#1467b8"/><path d="M455.600 563.200l6.400 3.800 6.400-3.800v6.600h-12.800z" fill="#3ea0ea"/><path d="M455.600 563.200l6.400 3.800 6.400-3.800" fill="none" stroke="#d6ecfb" stroke-width=".8"/><rect x="485" y="558.800" width="12" height="11.400" fill="#2a7fd0"/><path d="M485 570.200v-2l4.400-4.400 3 3 2-2 2.600 3v2.400z" fill="#0c3f86"/><circle cx="494.400" cy="561.400" r=".8" fill="#fff"/><path d="M515.600 559.600l8.200-1.400 1.600 10.600-8.200 1.400z" fill="#9fd4ee"/><path d="M515.600 559.600l8.200-1.400.4 2-8.300 1.400z" fill="#5aa6d0"/><circle cx="548.200" cy="564.400" r="6.400" fill="#e6d21e"/><path d="M577 557.600l2 4.800 4.600-.4-3.200 3.600 2.400 4.600-4.800-2-4 3 .6-5-4.200-2.600 5-.8z" fill="#6483b4"/><path d="M577.600 563l4.400 6-2 .2 1 2.200-1 .4-1-2.200-1.400 1.200z" fill="#fff" stroke="#333" stroke-width=".3"/><rect x="599.600" y="558.200" width="13" height="12.600" rx="1.500" fill="#13202a"/><path d="M604.400 561.600l3.400 2.200-3.400 2.200z" fill="#3fe0b8"/><path d="M603.400 568.400l6.400-3.800 .8 1.600-6.400 3.600z" fill="#3fe0b8"/><rect x="621.200" y="553.500" width="27.600" height="22.500" fill="#33434f"/><rect x="631.400" y="558.600" width="9.600" height="11.800" rx=".8" fill="#2b7cd3"/><rect x="631.400" y="564.600" width="9.600" height="5.800" fill="#185abd"/><rect x="628" y="561" width="7.400" height="7.400" rx=".6" fill="#124a9e"/><rect x="656" y="559" width="10.600" height="9.200" rx="1" fill="#19a3b8"/><path d="M666.600 562l3.400-1.800v6.800l-3.400-1.800z" fill="#19a3b8"/><circle cx="661.300" cy="563.600" r="2.300" fill="#e03a3a"/><path d="M661.300 568.200v2.200m-2.600 0h5.200" stroke="#19a3b8" stroke-width=".8"/><rect x="537" y="575" width="24" height="1" fill="#7ab4e6"/><rect x="594.5" y="575" width="22.5" height="1" fill="#7ab4e6"/><rect x="621.2" y="575" width="27.59999999999991" height="1" fill="#7ab4e6"/><rect x="655" y="575" width="21" height="1" fill="#7ab4e6"/><path d="M708.800 566.400l3.200-3 3.200 3" fill="none" stroke="#c2c7cc" stroke-width=".8"/><rect x="729.400" y="561" width="3.600" height="7.400" rx=".6" fill="none" stroke="#c2c7cc" stroke-width=".7"/><path d="M733.400 564.700h2.200" stroke="#c2c7cc" stroke-width=".7"/><rect x="744" y="562" width="8.600" height="5" fill="#c2c7cc"/><rect x="743.400" y="561.200" width="2.600" height="1.600" fill="#c2c7cc"/><path d="M764.600 567.400h8a2.200 2.200 0 0 0 .2-4.400a3.200 3.200 0 0 0-6-.6a2.600 2.600 0 0 0-2.200 5z" fill="#c2c7cc"/><path d="M781.600 563.400h1.800l2.400-2.200v7l-2.400-2.200h-1.800z" fill="none" stroke="#c2c7cc" stroke-width=".7"/><path d="M787.400 562.600q1.400 2.100 0 4.200M788.800 561.400q2.200 3.300 0 6.600" fill="none" stroke="#c2c7cc" stroke-width=".6"/><rect x="799.600" y="561.400" width="8.800" height="5.600" fill="none" stroke="#c2c7cc" stroke-width=".8"/><path d="M802.400 568.800h3.200" stroke="#c2c7cc" stroke-width=".8"/><path d="M822.200 567.600l5.600-5.800" stroke="#c2c7cc" stroke-width="1.600"/><circle cx="822.600" cy="567.400" r="1.200" fill="none" stroke="#c2c7cc" stroke-width=".7"/><circle cx="827.600" cy="562" r="1.200" fill="none" stroke="#c2c7cc" stroke-width=".7"/><circle cx="857.600" cy="564" r="3.800" fill="#2a72d4"/><circle cx="860.600" cy="566.800" r="1.600" fill="#e08a3a"/><path d="M919.400 560.400h9v6.200h-5l-2 2v-2h-2z" fill="none" stroke="#c2c7cc" stroke-width=".8"/><path d="M921.200 562.400h5.400M921.200 564.200h5.400" stroke="#c2c7cc" stroke-width=".5"/><circle cx="927.600" cy="567.200" r="1.600" fill="#1c2c38" stroke="#c2c7cc" stroke-width=".5"/><rect x="940.400" y="553.500" width=".7" height="22.500" fill="#6a7780"/></svg>
<span id="t81" class="t" style="left:130px;top:558.28px;font-size:8.4px;line-height:13.44px;color:#222;font-family:'Liberation Sans','Noto Sans CJK JP',sans-serif;font-weight:400;transform:scaleX(0.883);">ここに入力して検索</span>
<span id="t82" class="t" style="left:629.4px;top:560.96px;font-size:4.8px;line-height:7.68px;color:#fff;font-family:'Liberation Sans','Noto Sans CJK JP',sans-serif;font-weight:700;transform:scaleX(1.015);">W</span>
<span id="t83" class="t" style="left:838.7px;top:557.88px;font-size:8.4px;line-height:13.44px;color:#e6e6e6;font-family:'Liberation Sans','Noto Sans CJK JP',sans-serif;font-weight:400;transform:scaleX(0.931);">あ</span>
<span id="t84" class="t" style="left:883.6px;top:554.42px;font-size:6.6px;line-height:10.56px;color:#e6e6e6;font-family:'Liberation Sans','Noto Sans CJK JP',sans-serif;font-weight:400;transform:scaleX(0.975);">15:43</span>
<span id="t85" class="t" style="left:873.8px;top:564.42px;font-size:6.6px;line-height:10.56px;color:#e6e6e6;font-family:'Liberation Sans','Noto Sans CJK JP',sans-serif;font-weight:400;transform:scaleX(1.081);">2021/03/03</span>
</div><div class="ctl">
<div style="position:absolute;left:0;top:467px;width:1024px;height:109px;background:linear-gradient(to bottom,rgba(0,0,0,0) 0%,rgba(0,0,0,.10) 10%,rgba(0,0,0,.20) 22%,rgba(0,0,0,.375) 46%,rgba(0,0,0,.455) 67%,rgba(0,0,0,.52) 100%);"></div>
<svg style="position:absolute;left:0px;top:0px;overflow:visible;" width="1024" height="576" viewBox="0 0 1024 576"><rect x="13" y="516.400" width="836" height="1.300" fill="#55b7ea"/><rect x="858" y="516.600" width="153" height=".8" fill="#fff" opacity=".3"/><circle cx="853" cy="517" r="4.400" fill="none" stroke="#55b7ea" stroke-width="1.300"/><path d="M20.400 544.400h2l2.800-2.600v8.800l-2.800-2.600h-2z" fill="none" stroke="#fff" stroke-width=".9"/><path d="M27 543.800q1.600 2.400 0 4.800M28.800 542.400q2.600 3.800 0 7.600" fill="none" stroke="#fff" stroke-width=".8"/><path d="M47.600 542h10.400v6.400h-6.400l-2 2.200v-2.200h-2z" fill="none" stroke="#fff" stroke-width="1"/><rect x="47.600" y="542" width="10.400" height="3" fill="#fff"/><path d="M481.200 545.400q4.200-6 9.400.600" fill="none" stroke="#fff" stroke-width="1"/><path d="M479.800 543.200l3 .600-1.200 2.800z" fill="#fff" stroke="#fff" stroke-width=".5"/><path d="M509.500 542.600l6 4.150-6 4.150z" fill="none" stroke="#fff" stroke-width="1"/><path d="M533.200 546q5.200-6.600 9.600-.600" fill="none" stroke="#fff" stroke-width="1"/><path d="M544.400 543.200l-3 .600 1.200 2.800z" fill="#fff" stroke="#fff" stroke-width=".5"/><path d="M914 551.600l.8-3 6.600-6.800 2.200 2.200-6.600 6.800z" fill="none" stroke="#fff" stroke-width="1"/><path d="M919.600 543.600l2.200 2.200" stroke="#fff" stroke-width=".8"/><rect x="939.600" y="542.400" width="10" height="7.400" fill="none" stroke="#fff" stroke-width="1"/><rect x="943.600" y="544.600" width="4.400" height="3.200" fill="#fff"/><path d="M977 540.800l-4.400 4.400m0-3.200v3.200h3.200M965.800 552l4.400-4.400m0 3.200v-3.200h-3.200" fill="none" stroke="#fff" stroke-width=".9"/><rect x="992.9" y="545.800" width="1.300" height="1.300" fill="#fff"/><rect x="997.4" y="545.800" width="1.300" height="1.300" fill="#fff"/><rect x="1001.9" y="545.800" width="1.300" height="1.300" fill="#fff"/><path d="M16.200 8.200h-5.800m2.600-2.800l-2.800 2.800 2.800 2.800" fill="none" stroke="#fff" stroke-width="1"/><path d="M11 281.600l-6.400 6.300 6.400 6.300" fill="none" stroke="#c8c8c8" stroke-width=".9"/><path d="M1013 281.600l6.400 6.300-6.400 6.300" fill="none" stroke="#c8c8c8" stroke-width=".9"/></svg>
<span id="t86" class="t" style="left:13px;top:523.74px;font-size:6.2px;line-height:9.92px;color:#fff;font-family:'Liberation Sans','Noto Sans CJK JP',sans-serif;font-weight:400;transform:scaleX(0.968);">0:03:30</span>
<span id="t87" class="t" style="left:991px;top:523.74px;font-size:6.2px;line-height:9.92px;color:#fff;font-family:'Liberation Sans','Noto Sans CJK JP',sans-serif;font-weight:400;transform:scaleX(0.968);">0:00:38</span>
<span id="t88" class="t" style="left:482.4px;top:544.4px;font-size:6px;line-height:9.6px;color:#fff;font-family:'Liberation Sans','Noto Sans CJK JP',sans-serif;font-weight:700;transform:scaleX(0.972);">10</span>
<span id="t89" class="t" style="left:535.5px;top:544.4px;font-size:6px;line-height:9.6px;color:#fff;font-family:'Liberation Sans','Noto Sans CJK JP',sans-serif;font-weight:700;transform:scaleX(0.987);">30</span>
</div>
</body></html>
